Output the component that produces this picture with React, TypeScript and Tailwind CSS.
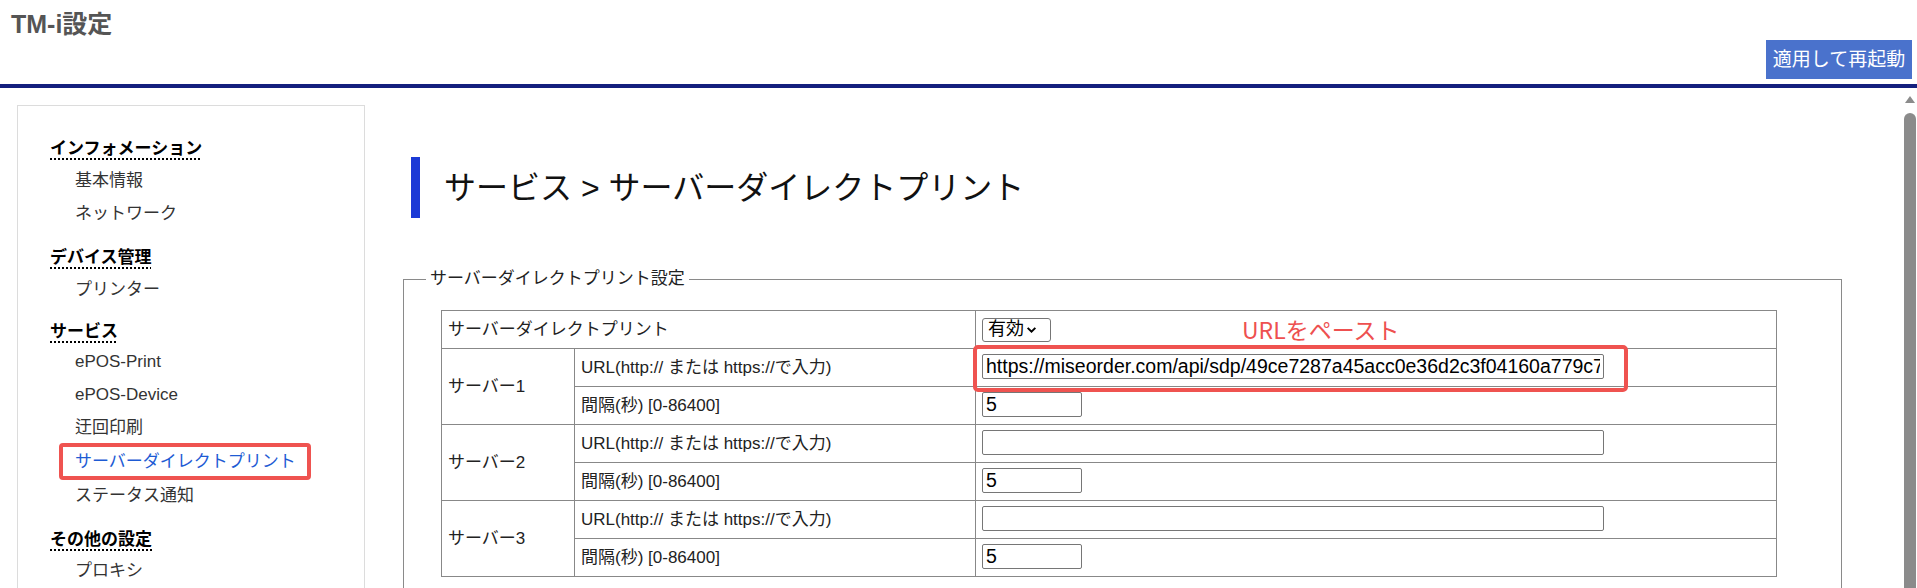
import React from 'react';

const font = 'font-["Liberation_Sans","Noto_Sans_CJK_JP",sans-serif]';

const menu = [
  { title: 'インフォメーション', items: ['基本情報', 'ネットワーク'], head: 'h-[32px]' },
  { title: 'デバイス管理', items: ['プリンター'], head: 'h-[32px]' },
  { title: 'サービス', items: ['ePOS-Print', 'ePOS-Device', '迂回印刷', 'サーバーダイレクトプリント', 'ステータス通知'], head: 'h-[28px]' },
  { title: 'その他の設定', items: ['プロキシ'], head: 'h-[30px]' },
];

function Sidebar() {
  return (
    <div className="w-[348px] shrink-0 border border-[#dcdcdc] pt-[26px] h-[600px]">
      {menu.map((group, gi) => (
        <div key={group.title} className={gi === 0 ? '' : gi === 3 ? 'mt-[12px]' : 'mt-[11px]'}>
          <div className={`${group.head} flex items-center pl-[32px]`}>
            <span className="text-[17px] font-bold text-black leading-none underline decoration-dotted decoration-2 underline-offset-[5px]">
              {group.title}
            </span>
          </div>
          {group.items.map((item) =>
            item === 'サーバーダイレクトプリント' ? (
              <div key={item} className="h-[35px] flex items-center pl-[41px]">
                <span className="h-[37px] flex items-center border-4 border-[#ef5350] rounded-[4px] pl-[12px] pr-[11px] text-[17px] text-[#1e5bd4]">
                  {item}
                </span>
              </div>
            ) : (
              <div key={item} className="h-[33px] flex items-center pl-[57px] text-[17px] text-[#333]">
                {item}
              </div>
            ),
          )}
        </div>
      ))}
    </div>
  );
}

function TextBox({ value, wide }: { value: string; wide?: boolean }) {
  return (
    <input
      readOnly
      value={value}
      className={`${wide ? 'w-[622px]' : 'w-[100px]'} h-[25px] border border-[#767676] rounded-[2px] px-[3px] text-[19.5px] text-black bg-white outline-none ${font}`}
    />
  );
}

function ServerRows({ n, url }: { n: number; url: string }) {
  const cell = 'border border-[#888] px-[6px] text-[17px] text-[#222] h-[38px]';
  return (
    <>
      <tr>
        <td rowSpan={2} className={cell}>サーバー{n}</td>
        <td className={cell}>URL(http:// または https://で入力)</td>
        <td className={`${cell} relative`}>
          <TextBox value={url} wide />
          {n === 1 && (
            <div className="absolute left-[-3px] top-[-4px] w-[655px] h-[47px] border-4 border-[#ef5350] rounded-[5px] pointer-events-none" />
          )}
        </td>
      </tr>
      <tr>
        <td className={cell}>間隔(秒) [0-86400]</td>
        <td className={cell}>
          <TextBox value="5" />
        </td>
      </tr>
    </>
  );
}

export default function App() {
  const cell = 'border border-[#888] px-[6px] text-[17px] text-[#222] h-[38px]';
  return (
    <div className={`w-[1917px] h-[588px] overflow-hidden bg-white flex flex-col ${font}`}>
      <header className="h-[84px] flex justify-between shrink-0">
        <div className="pl-[11px] pt-[9px] text-[25px] leading-[30px] font-bold text-[#555]">TM-i設定</div>
        <button className="self-end mb-[5px] mr-[5px] w-[146px] h-[39px] bg-[#4a72cc] text-white text-[19px] leading-none">
          適用して再起動
        </button>
      </header>
      <div className="h-[4px] bg-[#14207e] shrink-0" />
      <div className="flex flex-1 min-h-0">
        <div className="flex flex-1 pl-[17px] pt-[17px] min-w-0">
          <Sidebar />
          <main className="flex-1 pl-[38px] pr-[61px]">
            <div className="mt-[52px] ml-[8px] flex items-center h-[61px]">
              <div className="w-[9px] h-[61px] bg-[#1c3ad6]" />
              <h1 className="ml-[24px] text-[32px] text-[#111] leading-none">サービス &gt; サーバーダイレクトプリント</h1>
            </div>
            <fieldset className="mt-[49px] border border-[#8a8a8a] h-[400px]">
              <legend className="ml-[22px] px-[4px] text-[17px] text-[#222] leading-[24px]">サーバーダイレクトプリント設定</legend>
              <table className="mt-[19px] ml-[37px] w-[1336px] border-collapse">
                <colgroup>
                  <col className="w-[133px]" />
                  <col className="w-[401px]" />
                  <col />
                </colgroup>
                <tbody>
                  <tr>
                    <td colSpan={2} className={cell}>サーバーダイレクトプリント</td>
                    <td className={cell}>
                      <div className="flex items-center">
                        <div className="w-[69px] h-[24px] border border-[#767676] rounded-[3px] flex items-center pl-[5px] text-[18px] text-black">
                          有効
                          <svg viewBox="0 0 10 10" className="w-[11px] h-[11px] ml-[2px]">
                            <path d="M1.5 3.5 L5 7 L8.5 3.5" fill="none" stroke="#000" strokeWidth="1.8" />
                          </svg>
                        </div>
                        <span className="ml-[191px] text-[23px] text-[#ee5050] leading-none font-['Noto_Sans_CJK_JP',sans-serif]">
                          URLをペースト
                        </span>
                      </div>
                    </td>
                  </tr>
                  <ServerRows n={1} url="https://miseorder.com/api/sdp/49ce7287a45acc0e36d2c3f04160a779c76" />
                  <ServerRows n={2} url="" />
                  <ServerRows n={3} url="" />
                </tbody>
              </table>
            </fieldset>
          </main>
        </div>
        <div className="w-[14px] shrink-0 flex flex-col items-center pt-[7px]">
          <svg viewBox="0 0 12 9" className="w-[12px] h-[9px]">
            <path d="M6 1 L11 8 L1 8 Z" fill="#8b8b8b" />
          </svg>
          <div className="mt-[9px] w-[12px] flex-1 bg-[#8b8b8b] rounded-t-full" />
        </div>
      </div>
    </div>
  );
}
